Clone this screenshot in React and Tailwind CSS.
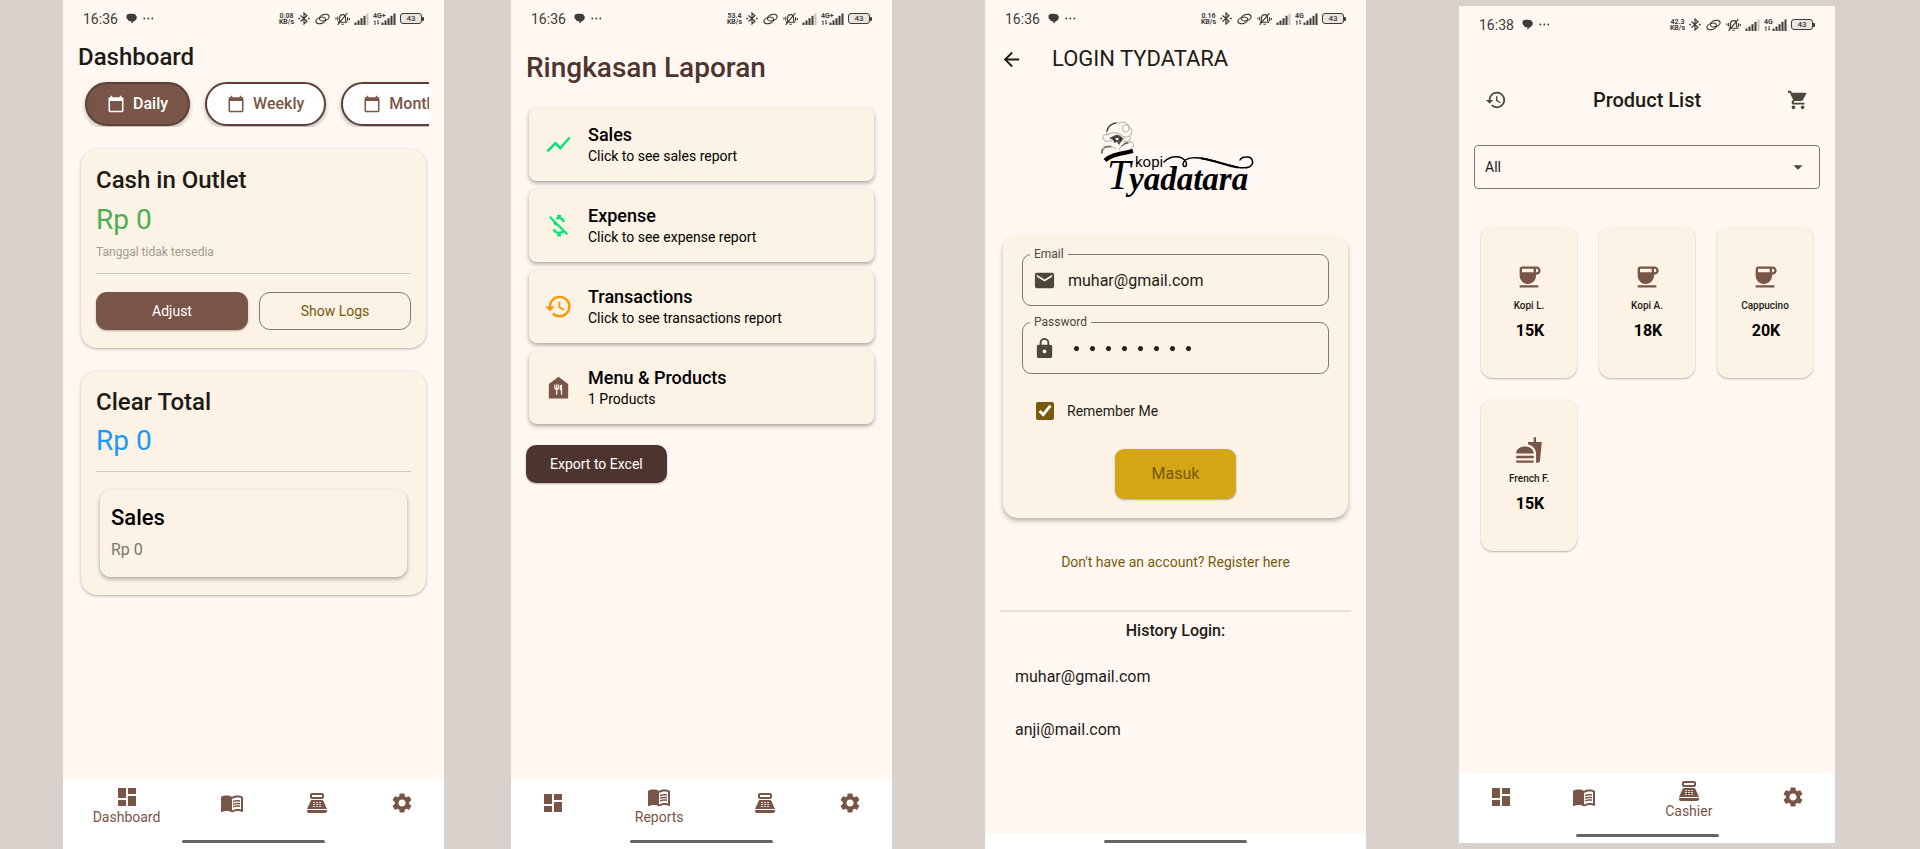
import React, { useState } from "react";
import {
  MdArrowBack,
  MdArrowDropDown,
  MdCalendarToday,
  MdCoffee,
  MdDashboard,
  MdEmail,
  MdFastfood,
  MdFoodBank,
  MdHistory,
  MdLock,
  MdMenuBook,
  MdMoneyOff,
  MdPointOfSale,
  MdSettings,
  MdShoppingCart,
  MdShowChart,
} from "react-icons/md";

function SignalBars({ full }) {
  return (
    <svg viewBox="0 0 15 12" className="h-3 w-[15px]" fill="#3f3b38" aria-hidden="true">
      <rect x="0.5" y="9.5" width="2" height="2.500" />
      <rect x="3.500" y="7.500" width="2" height="4.500" />
      <rect x="6.500" y="5.200" width="2" height="6.800" />
      <rect x="9.500" y="2.800" width="2" height="9.200" />
      <rect x="12.500" y="0.500" width="2" height="11.500" fillOpacity={full ? 1 : 0.3} />
    </svg>
  );
}

function StatusBar({ time, speed, network }) {
  return (
    <div className="flex h-[37px] items-center px-5 text-[#3f3b38]">
      <span className="text-sm">{time}</span>
      <svg viewBox="0 0 11 11" className="ml-2 size-[11px]" fill="#3f3b38" aria-hidden="true">
        <path d="M2.500 1C4 .6 5.500.6 7 1c1.300 0 2.500.4 3 1.400.9.700 1 1.900.6 2.900 0 1.600-1.200 2.500-2.600 2.600-.7 1.200-1.600 2.100-2.800 2.700.2-.8.2-1.500.1-2.300C3.700 8.500 2.200 8 2 6.500.8 6 .2 4.900.5 3.800.2 2.300 1.200 1.300 2.500 1z" />
      </svg>
      <svg viewBox="0 0 11 3" className="ml-[6px] h-[3px] w-[11px]" fill="#3f3b38" aria-hidden="true">
        <circle cx="1.300" cy="1.500" r="0.900" />
        <circle cx="5.300" cy="1.500" r="0.900" />
        <circle cx="9.300" cy="1.500" r="0.900" />
      </svg>
      <div className="ml-auto flex items-center gap-1">
        <span className="flex flex-col items-center text-[7px] leading-[6px] font-bold">
          <span>{speed}</span>
          <span>KB/s</span>
        </span>
        <svg viewBox="0 0 12 13" className="h-[13px] w-3" fill="none" stroke="#3f3b38" strokeWidth="1.200" aria-hidden="true">
          <path d="M2.500 3.500 9 9.300 6 12V1l3 2.700L2.500 9.500" />
          <path d="M0.300 6.500h1.800M9.900 6.500h1.800" strokeWidth="1.600" />
        </svg>
        <svg viewBox="0 0 15 12" className="ml-px h-3 w-[15px]" fill="none" stroke="#3f3b38" strokeWidth="1.200" aria-hidden="true">
          <ellipse cx="9.200" cy="4.600" rx="5" ry="3.100" transform="rotate(-18 9.200 4.600)" />
          <ellipse cx="5.800" cy="7.400" rx="5" ry="3.100" transform="rotate(-18 5.800 7.400)" />
        </svg>
        <svg viewBox="0 0 16 14" className="ml-px h-[14px] w-[15px]" fill="none" stroke="#3f3b38" strokeWidth="1.200" aria-hidden="true">
          <path d="M3.800 10.500h8.600L11.300 8.800V6C11.300 3.800 10 2.300 8.100 2.300S4.900 3.800 4.900 6v2.800zM6.800 12.600h2.600M13.200.8 2.800 13.200M2.900 4.500v4M13.400 5v4M1 5.500v2M15.300 6v2" />
        </svg>
        <SignalBars />
        <span className="relative flex w-[23px] justify-end">
          <span className="absolute top-0 left-0 text-[7px] leading-[6px] font-bold">{network}</span>
          <svg viewBox="0 0 7 5" className="mr-px h-[5px] w-[7px] self-end" fill="none" stroke="#3f3b38" aria-hidden="true">
            <path d="M2 5V.8M.8 2 2 .8M5 0v4.200M5 4.200 6.200 3" />
          </svg>
          <SignalBars full />
        </span>
        <span className="flex items-center">
          <span className="flex h-[11px] w-[22px] items-center justify-center rounded-[3px] border border-[#3f3b38] bg-[#ebe5df] text-[8px] leading-[9px] font-medium">
            43
          </span>
          <span className="h-1 w-[2px] rounded-r-[1px] bg-[#3f3b38]" />
        </span>
      </div>
    </div>
  );
}

const NAV_ITEMS = [
  { name: "Dashboard", Icon: MdDashboard },
  { name: "Reports", Icon: MdMenuBook },
  { name: "Cashier", Icon: MdPointOfSale },
  { name: "Settings", Icon: MdSettings },
];

function HomeIndicator() {
  return <div className="mx-auto h-[3px] w-[143px] rounded-full bg-[#666666]" />;
}

function BottomNav({ active }) {
  return (
    <div className="mt-auto bg-white pb-[6px]">
      <nav className="flex h-[61px] items-start pt-[6px] text-[#795548]" aria-label="Main">
        {NAV_ITEMS.map(({ name, Icon }) =>
          name === active ? (
            <a key={name} href="#" className="flex flex-[3] flex-col items-center text-sm leading-4" aria-current="page">
              <Icon className="size-6" aria-hidden="true" />
              {name}
            </a>
          ) : (
            <a key={name} href="#" className="flex flex-[2] justify-center pt-[6px]" aria-label={name}>
              <Icon className="size-6" aria-hidden="true" />
            </a>
          )
        )}
      </nav>
      <HomeIndicator />
    </div>
  );
}

function Chip({ label, selected }) {
  return (
    <button
      type="button"
      className={
        "flex h-11 shrink-0 items-center gap-2 rounded-full border-2 border-[#5d4037] px-5 text-base font-medium shadow-[0_2px_4px_rgba(0,0,0,0.3)] " +
        (selected ? "bg-[#795548] text-white" : "bg-white text-[#795548]")
      }
    >
      <MdCalendarToday className="size-[18px]" aria-hidden="true" />
      {label}
    </button>
  );
}

function DashboardScreen() {
  return (
    <section className="col-start-2 flex min-w-0 flex-col bg-[#fff8f2]">
      <StatusBar time="16:36" speed="0.08" network="4G+" />
      <h1 className="px-[15px] pt-[2px] text-2xl leading-9 font-medium text-[#1e1b16]">Dashboard</h1>
      <div className="mx-[15px] mt-[5px] flex gap-[15px] overflow-hidden px-[7px] pt-[2px] pb-[1px]">
        <Chip label="Daily" selected />
        <Chip label="Weekly" />
        <Chip label="Monthly" />
      </div>

      <div className="mx-[18px] mt-[22px] rounded-2xl bg-[#fcf2e5] p-[15px] pb-[18px] shadow-[0_1px_3px_rgba(0,0,0,0.3)]">
        <h2 className="text-2xl leading-8 font-medium text-[#1e1b16]">Cash in Outlet</h2>
        <p className="mt-[6px] text-[28px] leading-9 text-[#4caf50]">Rp 0</p>
        <p className="mt-1 text-xs leading-5 text-[#a09a92]">Tanggal tidak tersedia</p>
        <hr className="mt-[11px] border-[#d1c8bb]" />
        <div className="mt-[18px] grid grid-cols-2 gap-[11px] text-sm">
          <button type="button" className="h-[38px] rounded-[11px] bg-[#795548] text-white shadow-[0_1px_2px_rgba(0,0,0,0.3)]">
            Adjust
          </button>
          <button type="button" className="h-[38px] rounded-[11px] border border-[#80786b] text-[#755b0b]">
            Show Logs
          </button>
        </div>
      </div>

      <div className="mx-[18px] mt-[23px] rounded-2xl bg-[#fcf2e5] p-[15px] pb-[18px] shadow-[0_1px_3px_rgba(0,0,0,0.3)]">
        <h2 className="text-2xl leading-8 font-medium text-[#1e1b16]">Clear Total</h2>
        <p className="mt-[5px] text-[28px] leading-9 text-[#2196f3]">Rp 0</p>
        <hr className="mt-3 border-[#d1c8bb]" />
        <div className="mx-1 mt-[18px] rounded-[11px] bg-[#fcf2e5] px-[11px] pt-3 pb-[15px] shadow-[0_2px_4px_rgba(0,0,0,0.32)]">
          <h3 className="text-[22px] leading-8 font-medium text-black">Sales</h3>
          <p className="mt-1 text-base leading-6 text-[#7a756e]">Rp 0</p>
        </div>
      </div>
      <BottomNav active="Dashboard" />
    </section>
  );
}

const REPORTS = [
  { title: "Sales", detail: "Click to see sales report", Icon: MdShowChart, color: "text-[#00e676]" },
  { title: "Expense", detail: "Click to see expense report", Icon: MdMoneyOff, color: "text-[#00e676]" },
  { title: "Transactions", detail: "Click to see transactions report", Icon: MdHistory, color: "text-[#ff9800]" },
  { title: "Menu & Products", detail: "1 Products", Icon: MdFoodBank, color: "text-[#795548]" },
];

function ReportsScreen() {
  return (
    <section className="col-start-4 flex min-w-0 flex-col bg-[#fff8f2]">
      <StatusBar time="16:36" speed="53.4" network="4G+" />
      <h1 className="mt-[11px] px-[15px] text-[28px] leading-10 font-medium text-[#4e342e]">Ringkasan Laporan</h1>
      <ul className="mx-[18px] mt-5 flex flex-col gap-2">
        {REPORTS.map(({ title, detail, Icon, color }) => (
          <li key={title}>
            <a
              href="#"
              className="flex h-[73px] items-center gap-[15px] rounded-lg bg-[#fcf2e5] px-[15px] shadow-[0_2px_4px_rgba(0,0,0,0.35)]"
            >
              <Icon className={"size-[29px] " + color} aria-hidden="true" />
              <span className="flex flex-col text-black">
                <span className="text-lg leading-[22px] font-medium">{title}</span>
                <span className="text-sm leading-5">{detail}</span>
              </span>
            </a>
          </li>
        ))}
      </ul>
      <button
        type="button"
        className="mt-[21px] ml-[15px] h-[38px] self-start rounded-[10px] bg-[#4e342e] px-6 text-sm text-white shadow-[0_1px_2px_rgba(0,0,0,0.3)]"
      >
        Export to Excel
      </button>
      <BottomNav active="Reports" />
    </section>
  );
}

function Logo() {
  return (
    <svg viewBox="-5 0 160 88" className="mx-auto h-[88px] w-40" role="img" aria-label="Kopi Tyadatara">
      <g fill="none" stroke="#8d8882" strokeWidth="0.700">
        <path d="M6 17C4 9 11 3 18 5c5-2 9 0 10 4 3 1 4 7 0 9-2 2-6 1-8-1-4-3-9-3-14 0z" />
        <path d="M21 9c3-4 8-2 7 2s-5 4-6 1 0-3-1-3z" />
        <path d="M6 17c-4-1-5 2-3 5 3 3 6 0 8 1M28 18c2 1 2 4-1 5l-5 1" />
        <path d="M1 36c-2-4 0-8 5-8 3-1 6 1 9 3M18 32c2-5 7-9 12-8 4 1 3 5 0 7-4 3-8 3-12 3" />
      </g>
      <g fill="none" stroke="#2a2826" strokeLinecap="round">
        <path d="M6 13c1-4 4-7 9-8" strokeWidth="1.100" />
        <path d="M1 35c0-5 4-7 9-6M21 28c2-2 4-3 6-3" strokeWidth="1" />
      </g>
      <path d="M8 20c4-1 6-4 9-3 3 0 3 3 6 3l-3 4-2 3-2-3-3 1-1-3z" fill="#57524d" />
      <path d="m12 19 2 4M16 18l-1 5M19 19l1 4" stroke="#1a1918" />
      <circle cx="16" cy="21" r="1.300" fill="#fff8f2" />
      <path d="M4 42.500C10 36.500 19 36 32 33" fill="none" stroke="#000" strokeWidth="4" />
      <text x="6" y="71" fontSize="42" className="font-['Liberation_Serif',serif] italic">T</text>
      <text x="28" y="72" fontSize="33" className="font-['Liberation_Serif',serif] font-bold italic">yadatara</text>
      <text x="34" y="49" fontSize="15" className="font-[Roboto,sans-serif]">kopi</text>
      <path
        d="M63 44C70 37 81 37 85 44c2 5-3 6-3 2 1-7 14-8 27-4 16 4 31 10 39 7 6-3 4-11-3-10-3 0-5 1-6 3"
        fill="none"
        stroke="#000"
        strokeWidth="1.500"
        strokeLinecap="round"
      />
      <path d="M100 40.500c12 1 24 7 37 9" fill="none" stroke="#000" strokeWidth="2.200" />
    </svg>
  );
}

function Field({ id, label, Icon, children }) {
  return (
    <fieldset className="min-w-0 rounded-[9px] border border-[#80786b] px-[7px] pb-[5px]">
      <legend className="px-1 text-xs leading-[14px] text-[#4e4639]">
        <label htmlFor={id}>{label}</label>
      </legend>
      <div className="flex h-[39px] items-center gap-3 pl-[3px]">
        <Icon className="size-[23px] shrink-0 text-[#4e4639]" aria-hidden="true" />
        {children}
      </div>
    </fieldset>
  );
}

function PasswordInput({ id }) {
  const [value, setValue] = useState("tyadatar");
  return (
    <div className="relative flex h-[30px] w-full min-w-0 items-center">
      <input
        id={id}
        type="password"
        value={value}
        onChange={(event) => setValue(event.target.value)}
        className="h-full w-full bg-transparent text-base text-transparent caret-[#1e1b16] outline-none"
      />
      <div className="pointer-events-none absolute left-[6px] flex gap-[11px]" aria-hidden="true">
        {Array.from(value, (_, index) => (
          <span key={index} className="size-[5px] rounded-full bg-[#1e1b16]" />
        ))}
      </div>
    </div>
  );
}

function LoginScreen() {
  return (
    <section className="col-start-6 flex min-w-0 flex-col bg-[#fff8f2]">
      <StatusBar time="16:36" speed="0.16" network="4G" />
      <header className="mt-[5px] flex h-[34px] items-center gap-[29px] pl-[15px] text-[#1e1b16]">
        <button type="button" aria-label="Back">
          <MdArrowBack className="size-[23px]" aria-hidden="true" />
        </button>
        <h1 className="text-[22px] leading-7">LOGIN TYDATARA</h1>
      </header>
      <div className="mt-[42px]">
        <Logo />
      </div>
      <form
        className="mx-[18px] mt-[29px] rounded-[15px] bg-[#fcf2e5] px-[19px] pt-3 pb-[19px] shadow-[0_3px_5px_rgba(0,0,0,0.28)]"
        onSubmit={(event) => event.preventDefault()}
      >
        <Field id="email" label="Email" Icon={MdEmail}>
          <input
            id="email"
            type="email"
            defaultValue="muhar@gmail.com"
            className="h-[30px] w-full min-w-0 bg-transparent text-base text-[#1e1b16] outline-none"
          />
        </Field>
        <div className="mt-[9px]">
          <Field id="password" label="Password" Icon={MdLock}>
            <PasswordInput id="password" />
          </Field>
        </div>
        <div className="mt-[27px] flex items-center gap-[13px] pl-[14px] text-[#1e1b16]">
          <input id="remember" type="checkbox" defaultChecked className="size-[18px] accent-[#775a0b]" />
          <label htmlFor="remember" className="text-sm">
            Remember Me
          </label>
        </div>
        <button
          type="submit"
          className="mx-auto mt-[28px] block h-[50px] w-[121px] rounded-[9px] bg-[#d4a517] text-base text-[#775a0b] shadow-[0_1px_2px_rgba(0,0,0,0.3)]"
        >
          Masuk
        </button>
      </form>
      <a href="#" className="mt-[34px] self-center text-sm text-[#755b0b]">
        Don't have an account? Register here
      </a>
      <hr className="mx-[15px] mt-[38px] border-t-2 border-[#e8e2d6]" />
      <h2 className="mt-[7px] text-center text-base font-medium text-[#1e1b16]">History Login:</h2>
      <ul className="mt-[7px] px-[30px] text-base leading-[53px] text-[#1e1b16]">
        <li>muhar@gmail.com</li>
        <li>anji@mail.com</li>
      </ul>
      <div className="mt-auto bg-white pt-[6px] pb-[6px]">
        <HomeIndicator />
      </div>
    </section>
  );
}

const PRODUCTS = [
  { name: "Kopi L.", price: "15K", Icon: MdCoffee },
  { name: "Kopi A.", price: "18K", Icon: MdCoffee },
  { name: "Cappucino", price: "20K", Icon: MdCoffee },
  { name: "French F.", price: "15K", Icon: MdFastfood },
];

function ProductsScreen() {
  return (
    <section className="col-start-8 my-[6px] flex min-w-0 flex-col bg-[#fff8f2]">
      <StatusBar time="16:38" speed="42.3" network="4G" />
      <header className="mt-[39px] flex h-9 items-center justify-between px-[26px] text-[#4e4639]">
        <button type="button" aria-label="History">
          <MdHistory className="size-[22px]" aria-hidden="true" />
        </button>
        <h1 className="text-xl font-medium text-[#1e1b16]">Product List</h1>
        <button type="button" aria-label="Cart">
          <MdShoppingCart className="size-[22px]" aria-hidden="true" />
        </button>
      </header>
      <div className="relative mx-[15px] mt-[27px]">
        <select
          aria-label="Category"
          className="h-11 w-full appearance-none rounded-[4px] border border-[#80786b] bg-transparent px-[10px] text-sm text-[#1e1b16]"
        >
          <option>All</option>
        </select>
        <MdArrowDropDown className="pointer-events-none absolute top-[11px] right-[11px] size-[22px] text-[#4e4639]" aria-hidden="true" />
      </div>
      <ul className="mx-[22px] mt-[37px] grid grid-cols-3 gap-x-[22px] gap-y-[21px]">
        {PRODUCTS.map(({ name, price, Icon }) => (
          <li key={name}>
            <button
              type="button"
              className="flex h-[152px] w-full flex-col items-center rounded-xl bg-[#fcf2e5] pt-[37px] shadow-[0_1px_2px_rgba(0,0,0,0.28)]"
            >
              <Icon className="size-7 text-[#795548]" aria-hidden="true" />
              <span className="mt-2 text-[10px] leading-[14px] font-medium text-[#1e1b16]">{name}</span>
              <span className="mt-2 pl-[2px] text-base leading-5 font-bold text-black">{price}</span>
            </button>
          </li>
        ))}
      </ul>
      <BottomNav active="Cashier" />
    </section>
  );
}

export default function App() {
  return (
    <main className="grid min-h-screen grid-cols-[minmax(0,63fr)_minmax(0,381fr)_minmax(0,67fr)_minmax(0,381fr)_minmax(0,93fr)_minmax(0,381fr)_minmax(0,93fr)_minmax(0,376fr)_minmax(0,85fr)] bg-[#d9d1cb] font-[Roboto,sans-serif]">
      <DashboardScreen />
      <ReportsScreen />
      <LoginScreen />
      <ProductsScreen />
    </main>
  );
}
